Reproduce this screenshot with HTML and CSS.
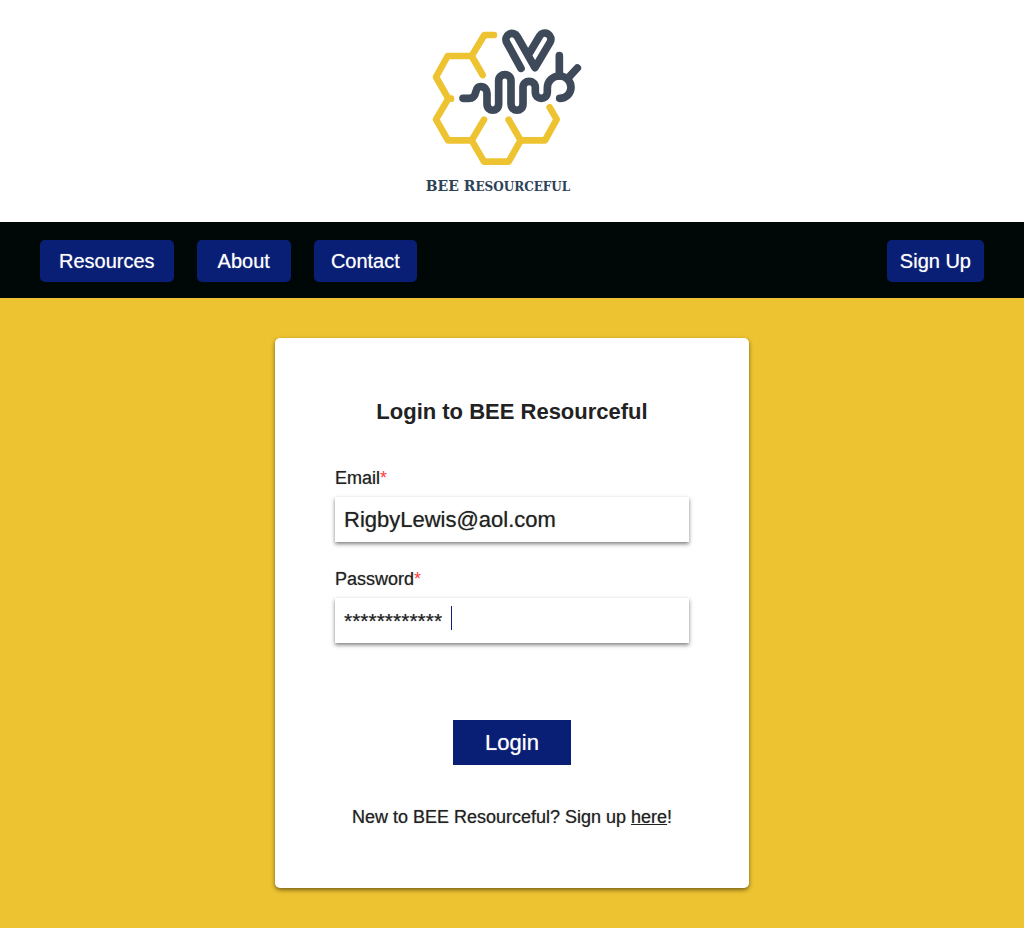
FILE: index.html
```html
<!DOCTYPE html>
<html lang="en">
<head>
<meta charset="utf-8">
<meta name="viewport" content="width=device-width, initial-scale=1">
<title>BEE Resourceful</title>
<link rel="stylesheet" href="styles.css">
</head>
<body>
<header class="header">
  <div class="brand">
    <svg class="logo" viewBox="0 0 540 450" fill="none" stroke-linecap="round" stroke-linejoin="round" aria-hidden="true">
      <g class="comb">
        <path d="M234 45H205L167 108L200 165"/>
        <path d="M167 108H95L60 171L97 236H105"/>
        <path d="M97 236L60 298L96 361H167L204 299"/>
        <path d="M167 361L204 425H278L314 361L278 299"/>
        <path d="M314 361H387L422 298L401 262"/>
      </g>
      <g class="bee">
        <path d="M141 235H158C190 235 170 200 194 200C206 200 213 208 213 220V252C213 277 248 277 248 252V182C248 158 285 158 285 182V252C285 277 321 277 321 252V202C321 178 358 178 358 202V217C358 241 394 241 394 217V205C394 182 411 168 431 168C450 168 465 184 465 202C465 221 450 235 431 235"/>
        <path d="M430 168V107M458 172L484 144"/>
        <path d="M315 145L272 67A18 18 0 0 1 304 50L357 143L402 67A18 18 0 0 0 371 48L340 100"/>
      </g>
    </svg>
    <span class="wordmark">BEE R<span class="wordmark-small">esourceful</span></span>
  </div>
</header>
<nav class="nav" aria-label="Main">
  <a class="nav-link" href="#resources">Resources</a>
  <a class="nav-link nav-link-about" href="#about">About</a>
  <a class="nav-link nav-link-contact" href="#contact">Contact</a>
  <a class="nav-link nav-link-signup" href="#signup">Sign Up</a>
</nav>
<main class="main">
  <form class="card">
    <h1 class="title">Login to BEE Resourceful</h1>
    <div class="field">
      <label class="label" for="email">Email<span class="required">*</span></label>
      <input class="input" id="email" type="text" inputmode="email" value="RigbyLewis@aol.com">
    </div>
    <div class="field">
      <label class="label" for="password">Password<span class="required">*</span></label>
      <div class="input-wrap">
        <input class="input input-password" id="password" type="text" autocomplete="off" value="************">
        <span class="caret"></span>
      </div>
    </div>
    <button class="submit" type="submit">Login</button>
    <p class="signup">New to BEE Resourceful? Sign up <a class="signup-link" href="#signup">here</a>!</p>
  </form>
</main>
</body>
</html>
```
FILE: styles.css
```css
* {
  box-sizing: border-box;
}

body {
  margin: 0;
  min-height: 100vh;
  display: flex;
  flex-direction: column;
  background: #edc331;
  color: #222;
  font-family: "Helvetica Neue", "Liberation Sans", Arial, sans-serif;
}

.header {
  display: flex;
  justify-content: center;
  padding: 20px 12px 23px 0;
  background: #fff;
}

.brand {
  display: flex;
  flex-direction: column;
  align-items: center;
}

.logo {
  width: 180px;
  height: 150px;
}

.comb {
  stroke: #edc331;
  stroke-width: 20;
}

.bee {
  stroke: #3e4a5a;
  stroke-width: 23;
}

.wordmark {
  margin: 4px 16px 0 0;
  color: #2c4256;
  font: bold 14px/24px "Copperplate", "DejaVu Serif", serif;
}

.wordmark-small {
  font-size: 12px;
  text-transform: uppercase;
}

.nav {
  display: flex;
  align-items: center;
  gap: 23px;
  padding: 18px 40px 16px;
  background: #000807;
}

.nav-link {
  padding: 0 19px;
  border-radius: 5px;
  background: #081f75;
  color: #fff;
  font-size: 20px;
  line-height: 42px;
  text-decoration: none;
  text-shadow: 0 0 1px rgba(255, 255, 255, 0.6);
}

.nav-link-about {
  padding: 0 21px;
}

.nav-link-contact {
  padding: 0 17px;
}

.nav-link-signup {
  margin-left: auto;
  padding: 0 13px;
}

.main {
  flex: 1;
  padding: 40px;
}

.card {
  display: flex;
  flex-direction: column;
  max-width: 474px;
  margin: 0 auto;
  padding: 60px 60px 59px;
  border-radius: 5px;
  background: #fff;
  box-shadow: 0 2px 4px rgba(0, 0, 0, 0.5);
}

.title {
  margin: 0 0 40px;
  font-size: 22px;
  line-height: 28px;
  text-align: center;
}

.field {
  display: flex;
  flex-direction: column;
  gap: 7px;
  margin-bottom: 25px;
}

.label {
  font-size: 18px;
  line-height: 24px;
  text-shadow: 0 0 1px rgba(34, 34, 34, 0.5);
}

.required {
  color: #ff3b3b;
  text-shadow: none;
}

.input-wrap {
  position: relative;
}

.input {
  display: block;
  width: 100%;
  height: 45px;
  padding: 0 9px;
  border: 0;
  background: #fff;
  box-shadow: 0 2px 4px rgba(0, 0, 0, 0.5);
  color: #222;
  font-family: inherit;
  font-size: 22px;
  text-shadow: 0 0 1px rgba(34, 34, 34, 0.5);
}

.input-password {
  font-size: 21px;
}

.caret {
  position: absolute;
  top: 8px;
  left: 116px;
  width: 1px;
  height: 24px;
  background: #081f75;
}

.submit {
  align-self: center;
  width: 118px;
  height: 45px;
  margin: 52px 0 40px;
  border: 0;
  background: #081f75;
  color: #fff;
  font-family: inherit;
  font-size: 22px;
  text-shadow: 0 0 1px rgba(255, 255, 255, 0.6);
}

.signup {
  margin: 0;
  font-size: 18px;
  line-height: 24px;
  text-align: center;
  text-shadow: 0 0 1px rgba(34, 34, 34, 0.5);
}

.signup-link {
  color: inherit;
}
```
